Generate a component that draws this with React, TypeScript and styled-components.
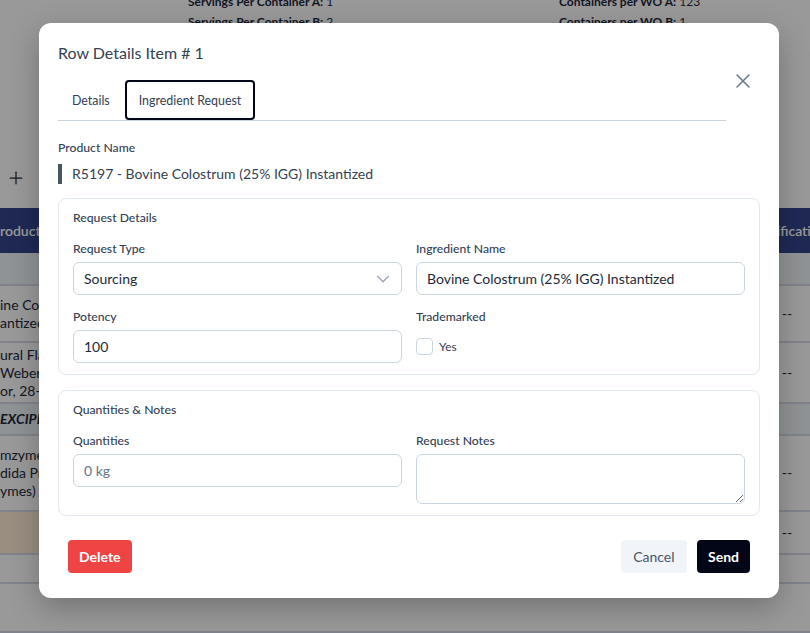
import React from "react";
import styled, { createGlobalStyle } from "styled-components";
import { ChevronDown, Plus, X } from "lucide-react";

const GlobalStyle = createGlobalStyle`
  * { box-sizing: border-box; }
  html, body { margin: 0; padding: 0; }
  body {
    font-family: Lato, "Noto Sans", sans-serif;
    color: #1e293b;
    background: #ffffff;
  }
`;

// ---- page behind the dialog ----

const Page = styled.div`
  position: relative;
  width: 100%;
  height: 633px;
  overflow: hidden;
  background: #ffffff;
`;

const InfoGrid = styled.div`
  display: grid;
  grid-template-columns: 371px auto;
  row-gap: 4px;
  margin-top: -6px;
  padding-left: 188px;
  font-size: 12px;
  line-height: 16px;
  color: #1e293b;
`;

const InfoLabel = styled.span`
  font-weight: 700;
`;

const Toolbar = styled.div`
  display: flex;
  align-items: center;
  height: 36px;
  margin-top: 130px;
  padding-left: 6px;
  color: #1e293b;
`;

const Table = styled.div`
  margin-top: 12px;
  width: calc(100% + 27px);
`;

type Tone = "head" | "plain" | "muted";

const Row = styled.div<{ h: number; tone: Tone }>`
  display: flex;
  height: ${({ h }) => h}px;
  background: ${({ tone }) => (tone === "head" ? "#35458c" : tone === "muted" ? "#f1f5f9" : "#ffffff")};
  border-bottom: ${({ tone }) => (tone === "head" ? "none" : "2px solid #d5dce6")};
  color: ${({ tone }) => (tone === "head" ? "#ffffff" : "#1e293b")};
  font-size: 14px;
  line-height: 18px;
  font-weight: ${({ tone }) => (tone === "head" ? 600 : 400)};
`;

const LeftCell = styled.div<{ italic?: boolean; warm?: boolean }>`
  flex: 0 0 150px;
  display: flex;
  flex-direction: column;
  justify-content: center;
  overflow: hidden;
  white-space: nowrap;
  background: ${({ warm }) => (warm ? "#ffedd5" : "transparent")};
  font-style: ${({ italic }) => (italic ? "italic" : "normal")};
  font-weight: ${({ italic }) => (italic ? 700 : "inherit")};
`;

const Filler = styled.div`
  flex: 1;
`;

const RightCell = styled.div`
  flex: 0 0 100px;
  display: flex;
  align-items: center;
  justify-content: center;
  white-space: nowrap;
`;

// ---- dialog ----

const Overlay = styled.div`
  position: absolute;
  inset: 0;
  display: flex;
  justify-content: center;
  align-items: flex-start;
  padding: 23px 0 0 8px;
  background: rgba(0, 0, 0, 0.4);
`;

const Modal = styled.div`
  position: relative;
  width: 740px;
  display: flex;
  flex-direction: column;
  padding: 20px 19px 25px;
  background: #ffffff;
  border-radius: 12px;
  box-shadow: 0 10px 30px rgba(0, 0, 0, 0.25);
`;

const Title = styled.h2`
  margin: 0;
  font-size: 16px;
  line-height: 20px;
  font-weight: 400;
  color: #334155;
`;

const CloseButton = styled.button`
  position: absolute;
  top: 46px;
  right: 24px;
  display: flex;
  padding: 0;
  border: none;
  background: none;
  color: #64748b;
  cursor: pointer;
`;

const TabList = styled.div`
  display: flex;
  gap: 1px;
  margin: 17px 34px 0 0;
  border-bottom: 1px solid #cbd5e1;
`;

const Tab = styled.button<{ active?: boolean }>`
  height: 40px;
  padding: 0 12px;
  border: 2px solid ${({ active }) => (active ? "#020617" : "transparent")};
  border-radius: 4px;
  background: transparent;
  font-family: inherit;
  font-size: 12.4px;
  color: #334155;
  cursor: pointer;
`;

const FieldLabel = styled.label`
  display: block;
  font-size: 12.2px;
  line-height: 16px;
  font-weight: 500;
  color: #334155;
`;

const ProductLabel = styled(FieldLabel)`
  margin-top: 19px;
`;

const ProductValue = styled.div`
  margin-top: 8px;
  padding-left: 10px;
  border-left: 4px solid #475569;
  font-size: 14px;
  line-height: 20px;
  color: #334155;
`;

const Card = styled.section<{ gap: number }>`
  margin-top: ${({ gap }) => gap}px;
  padding: 11px 14px 11px;
  border: 1px solid #e2e8f0;
  border-radius: 8px;
`;

const CardTitle = styled.h3`
  margin: 0 0 15px;
  font-size: 12.2px;
  line-height: 16px;
  font-weight: 500;
  color: #334155;
`;

const FieldGrid = styled.div`
  display: grid;
  grid-template-columns: 1fr 1fr;
  column-gap: 14px;
  row-gap: 14px;
`;

const Field = styled.div`
  display: flex;
  flex-direction: column;
  gap: 5px;
`;

const Input = styled.input`
  height: 33px;
  width: 100%;
  padding: 0 10px;
  border: 1px solid #cbd5e1;
  border-radius: 6px;
  font-family: inherit;
  font-size: 14px;
  color: #1e293b;
  outline: none;
  &::placeholder {
    color: #64748b;
  }
`;

const SelectTrigger = styled.button`
  display: flex;
  align-items: center;
  justify-content: space-between;
  height: 33px;
  width: 100%;
  padding: 0 7px 0 10px;
  border: 1px solid #cbd5e1;
  border-radius: 6px;
  background: #ffffff;
  font-family: inherit;
  font-size: 14px;
  color: #1e293b;
  cursor: pointer;
  svg {
    color: #94a3b8;
  }
`;

const TextArea = styled.textarea`
  height: 50px;
  width: 100%;
  padding: 8px 10px;
  border: 1px solid #cbd5e1;
  border-radius: 6px;
  font-family: inherit;
  font-size: 14px;
  color: #1e293b;
  resize: vertical;
  outline: none;
`;

const CheckRow = styled.label`
  display: flex;
  align-items: center;
  gap: 6px;
  height: 33px;
  font-size: 12px;
  color: #334155;
`;

const Checkbox = styled.input`
  appearance: none;
  width: 17px;
  height: 17px;
  margin: 0;
  border: 1px solid #cbd5e1;
  border-radius: 4px;
  background: #ffffff;
`;

const Footer = styled.div`
  display: flex;
  justify-content: space-between;
  align-items: center;
  margin-top: 24px;
  padding: 0 10px;
`;

const ButtonGroup = styled.div`
  display: flex;
  gap: 10px;
`;

const Button = styled.button<{ variant: "danger" | "ghost" | "primary" }>`
  height: 33px;
  padding: 0 ${({ variant }) => (variant === "ghost" ? 12.5 : 11)}px;
  border: none;
  border-radius: 4px;
  font-family: inherit;
  font-size: 14px;
  font-weight: ${({ variant }) => (variant === "ghost" ? 400 : 700)};
  color: ${({ variant }) => (variant === "ghost" ? "#475569" : "#ffffff")};
  background: ${({ variant }) =>
    variant === "danger" ? "#ef4444" : variant === "ghost" ? "#f1f5f9" : "#020617"};
  cursor: pointer;
`;

const rows: { h: number; tone: Tone; left: string[]; right?: string; italic?: boolean; warm?: boolean }[] = [
  { h: 45, tone: "head", left: ["roduct"], right: "Specification" },
  { h: 33, tone: "muted", left: [] },
  { h: 57, tone: "plain", left: ["ine Colostrum", "antized"], right: "--" },
  { h: 61, tone: "plain", left: ["ural Flavor", "Weber &", "or, 28-1"], right: "--" },
  { h: 32, tone: "muted", left: ["EXCIPIENTS"], italic: true },
  { h: 76, tone: "plain", left: ["mzymes", "dida Protease", "ymes)"], right: "--" },
  { h: 43, tone: "plain", left: [], right: "--", warm: true },
  { h: 29, tone: "plain", left: [] },
  { h: 49, tone: "plain", left: [] },
];

export default function App() {
  return (
    <>
      <GlobalStyle />
      <Page>
        <InfoGrid>
          <span><InfoLabel>Servings Per Container A:</InfoLabel> 1</span>
          <span><InfoLabel>Containers per WO A:</InfoLabel> 123</span>
          <span><InfoLabel>Servings Per Container B:</InfoLabel> 2</span>
          <span><InfoLabel>Containers per WO B:</InfoLabel> 1</span>
        </InfoGrid>
        <Toolbar>
          <Plus size={20} strokeWidth={1.5} />
        </Toolbar>
        <Table>
          {rows.map((r, i) => (
            <Row key={i} h={r.h} tone={r.tone}>
              <LeftCell italic={r.italic} warm={r.warm}>
                {r.left.map((l) => (
                  <div key={l}>{l}</div>
                ))}
              </LeftCell>
              <Filler />
              <RightCell>{r.right}</RightCell>
            </Row>
          ))}
        </Table>

        <Overlay>
          <Modal>
            <Title>Row Details Item # 1</Title>
            <CloseButton aria-label="Close">
              <X size={24} strokeWidth={1.5} />
            </CloseButton>
            <TabList>
              <Tab>Details</Tab>
              <Tab active>Ingredient Request</Tab>
            </TabList>

            <ProductLabel>Product Name</ProductLabel>
            <ProductValue>R5197 - Bovine Colostrum (25% IGG) Instantized</ProductValue>

            <Card gap={14}>
              <CardTitle>Request Details</CardTitle>
              <FieldGrid>
                <Field>
                  <FieldLabel>Request Type</FieldLabel>
                  <SelectTrigger>
                    Sourcing
                    <ChevronDown size={22} strokeWidth={1.3} />
                  </SelectTrigger>
                </Field>
                <Field>
                  <FieldLabel>Ingredient Name</FieldLabel>
                  <Input defaultValue="Bovine Colostrum (25% IGG) Instantized" />
                </Field>
                <Field>
                  <FieldLabel>Potency</FieldLabel>
                  <Input defaultValue="100" />
                </Field>
                <Field>
                  <FieldLabel>Trademarked</FieldLabel>
                  <CheckRow>
                    <Checkbox type="checkbox" />
                    Yes
                  </CheckRow>
                </Field>
              </FieldGrid>
            </Card>

            <Card gap={15}>
              <CardTitle>Quantities &amp; Notes</CardTitle>
              <FieldGrid>
                <Field>
                  <FieldLabel>Quantities</FieldLabel>
                  <Input placeholder="0 kg" />
                </Field>
                <Field>
                  <FieldLabel>Request Notes</FieldLabel>
                  <TextArea />
                </Field>
              </FieldGrid>
            </Card>

            <Footer>
              <Button variant="danger">Delete</Button>
              <ButtonGroup>
                <Button variant="ghost">Cancel</Button>
                <Button variant="primary">Send</Button>
              </ButtonGroup>
            </Footer>
          </Modal>
        </Overlay>
      </Page>
    </>
  );
}
